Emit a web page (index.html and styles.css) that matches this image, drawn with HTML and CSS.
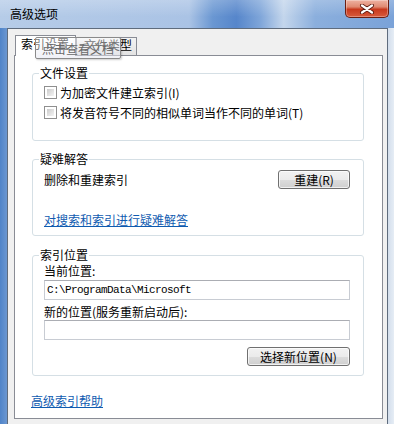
FILE: index.html
```html
<!DOCTYPE html>
<html lang="zh-CN">
  <head>
    <meta charset="UTF-8" />
    <meta name="viewport" content="width=device-width, initial-scale=1.0" />
    <title>高级选项</title>
    <link rel="stylesheet" href="styles.css">
  </head>
  <body>
    <div class="window">
      <div class="titlebar">
        <span class="title">高级选项</span>
        <div class="close-btn">
          <svg width="16" height="10" viewBox="0 0 16 10">
            <path d="M3 1.5 L13 8.5 M13 1.5 L3 8.5" stroke="#5a1a10" stroke-width="4" stroke-linecap="round" fill="none" />
            <path d="M3 1.5 L13 8.5 M13 1.5 L3 8.5" stroke="#fff" stroke-width="2.2" stroke-linecap="round" fill="none" />
          </svg>
        </div>
      </div>

      <div class="client">
        <div class="tabs">
          <div class="tab active">索引设置</div>
          <div class="tab">文件类型</div>
          <div class="tooltip">点击查看文档</div>
        </div>

        <div class="panel">
          <!-- 文件设置 -->
          <fieldset class="group files">
            <legend>文件设置</legend>
            <label class="check-row"><span class="checkbox"></span>为加密文件建立索引(I)</label>
            <label class="check-row"><span class="checkbox"></span>将发音符号不同的相似单词当作不同的单词(T)</label>
          </fieldset>

          <!-- 疑难解答 -->
          <fieldset class="group trouble">
            <legend>疑难解答</legend>
            <div class="row">
              <span>删除和重建索引</span>
              <button class="btn rebuild">重建(R)</button>
            </div>
            <a class="link" href="#">对搜索和索引进行疑难解答</a>
          </fieldset>

          <!-- 索引位置 -->
          <fieldset class="group location">
            <legend>索引位置</legend>
            <div class="field-label">当前位置:</div>
            <div class="field">C:\ProgramData\Microsoft</div>
            <div class="field-label second">新的位置(服务重新启动后):</div>
            <div class="field empty"></div>
            <div class="actions">
              <button class="btn choose">选择新位置(N)</button>
            </div>
          </fieldset>

          <a class="link help" href="#">高级索引帮助</a>
        </div>
      </div>
    </div>
  </body>
</html>
```

FILE: styles.css
```css
* {
  box-sizing: border-box;
}

body {
  margin: 0;
  width: 394px;
  height: 424px;
  overflow: hidden;
  font-family: "Noto Sans CJK SC", sans-serif;
  font-size: 12px;
  color: #000;
  background: linear-gradient(to right, #4f84c9 0, #6b97d1 7px, #8fb1dd 50%, #d3deec 388px, #e6edf5 100%);
}

.window {
  display: flex;
  flex-direction: column;
  height: 424px;
}

/* Title bar */
.titlebar {
  height: 28px;
  display: flex;
  justify-content: space-between;
  align-items: flex-start;
  background:
    linear-gradient(rgba(255, 255, 255, 0.22), rgba(255, 255, 255, 0) 60%),
    linear-gradient(to right, #b6cce8 0, #aac3e5 48%, #6a97d2 54%, #5686cb 60%, #7ea5d9 66%, #c4d6ec 72%, #8bafdd 80%, #7aa2d8 100%);
}

.title {
  padding: 7px 0 0 10px;
  line-height: 14px;
  font-size: 12px;
}

.close-btn {
  width: 44px;
  height: 18px;
  margin-right: 5px;
  border: 1px solid #6b1e12;
  border-top: none;
  border-radius: 0 0 5px 5px;
  background: linear-gradient(#eeb2a2 0%, #e08a72 40%, #c8391d 55%, #d85a3c 100%);
  box-shadow: inset 0 0 0 1px rgba(255, 255, 255, 0.3);
  display: flex;
  align-items: center;
  justify-content: center;
}

/* Client area */
.client {
  flex: 1;
  margin: 0 6px 0 7px;
  border: 1px solid #5f6c7d;
  border-bottom: none;
  background: #f0f0f0;
  padding: 8px 4px 0 6px;
}

.tabs {
  position: relative;
  display: flex;
  align-items: flex-end;
  height: 18px;
}

.tab {
  height: 18px;
  border: 1px solid #898c95;
  border-bottom: none;
  background: linear-gradient(#f3f3f3, #e3e3e3);
  line-height: 14px;
  padding: 0 4px 0 7px;
}

.tab.active {
  position: relative;
  z-index: 1;
  height: 21px;
  margin-left: 1px;
  margin-bottom: -1px;
  background: #fff;
  line-height: 16px;
  padding: 0 6px 0 5px;
}

/* half see-through, the tab labels show beneath it */
.tooltip {
  position: absolute;
  z-index: 2;
  left: 21px;
  top: 0;
  width: 86px;
  height: 22px;
  border: 1px solid #8a8a8a;
  border-radius: 2px;
  background: linear-gradient(rgba(255, 255, 255, 0.45), rgba(226, 228, 238, 0.5));
  box-shadow: 1px 1px 2px rgba(0, 0, 0, 0.2);
  color: #6a6a6a;
  line-height: 22px;
  text-align: center;
}

.panel {
  height: 364px;
  background: #fff;
  border: 1px solid #898c95;
  padding: 10px 18px 0 17px;
}

/* Group boxes */
.group {
  margin: 0;
  min-width: 0;
  border: 1px solid #d5dfe5;
  border-radius: 3px;
  padding: 2px 13px 17px 11px;
}

.group legend {
  padding: 0 1px;
  margin-left: -5px;
  line-height: 14px;
}

.group.files {
  padding-bottom: 18px;
}

.group.trouble {
  margin-top: 11px;
  padding-bottom: 8px;
}

.group.location {
  margin-top: 12px;
  padding-bottom: 9px;
}

.check-row {
  display: flex;
  align-items: center;
  gap: 3px;
  height: 20px;
}

.checkbox {
  width: 13px;
  height: 13px;
  border: 1px solid #8f8f8f;
  padding: 2px;
  background: linear-gradient(135deg, #cbcbcb, #f4f4f4) content-box, #fff;
}

.row {
  display: flex;
  justify-content: space-between;
  align-items: center;
  margin-top: 2px;
}

.btn {
  height: 19px;
  padding: 0;
  border: 1px solid #707070;
  border-radius: 3px;
  background: linear-gradient(#f2f2f2 0%, #ebebeb 50%, #dddddd 50%, #cfcfcf 100%);
  box-shadow: inset 0 0 0 1px rgba(255, 255, 255, 0.7);
  font-family: inherit;
  font-size: 12px;
  line-height: 16px;
  color: #000;
}

.btn.rebuild {
  width: 72px;
}

.btn.choose {
  width: 103px;
}

.link {
  display: block;
  width: max-content;
  color: #0f5bb0;
  text-decoration: underline;
  line-height: 14px;
}

.trouble .link {
  margin-top: 24px;
}

.field-label {
  line-height: 14px;
}

.field-label.second {
  margin-top: 5px;
}

.field {
  height: 20px;
  margin-top: 2px;
  border: 1px solid #c8ccd3;
  border-top-color: #abadb3;
  padding: 0 2px;
  font-family: "Liberation Mono", monospace;
  font-size: 11px;
  letter-spacing: -0.6px;
  line-height: 18px;
}

.field.empty {
  margin-top: 1px;
}

.actions {
  display: flex;
  justify-content: flex-end;
  margin-top: 7px;
}

.link.help {
  margin-top: 18px;
  margin-left: -1px;
}
```
